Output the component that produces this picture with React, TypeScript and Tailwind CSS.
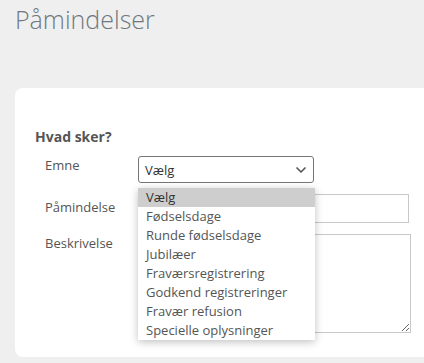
import { ChevronDown } from 'lucide-react'

const options = [
  'Vælg',
  'Fødselsdage',
  'Runde fødselsdage',
  'Jubilæer',
  'Fraværsregistrering',
  'Godkend registreringer',
  'Fravær refusion',
  'Specielle oplysninger',
]

export default function App() {
  return (
    <main
      className="h-[363px] w-[424px] overflow-hidden bg-[#efefef] text-[#555]"
      style={{ fontFamily: '"Open Sans", "Noto Sans", sans-serif' }}
    >
      <h1 className="pl-[15px] pt-[3px] text-[25px] font-light leading-[32px] text-[#6f7880]">Påmindelser</h1>

      <section className="relative ml-[15px] mt-[53px] w-[440px] rounded-[8px] bg-white pb-[24px] pl-[20px] pt-[39px]">
        <h2 className="text-[14px] font-bold leading-[20px] text-[#555]">Hvad sker?</h2>

        <div className="mt-[9px] grid grid-cols-[93px_1fr] gap-y-[11px] pl-[10px] text-[13px] leading-[18px]">
          <label>Emne</label>
          <div className="flex h-[27px] w-[176px] items-center justify-between rounded-[3px] border border-[#767676] pl-[6px] pr-[4px] text-[#333]">
            <span>Vælg</span>
            <ChevronDown size={16} strokeWidth={2.5} className="text-[#555]" />
          </div>

          <label className="pt-[4px]">Påmindelse</label>
          <input className="h-[29px] w-[271px] border border-[#c8c8c8] outline-none" />

          <label>Beskrivelse</label>
          <textarea className="h-[99px] w-[273px] border border-[#c8c8c8] outline-none" />
        </div>

        <ul className="absolute left-[123px] top-[100px] w-[177px] bg-white py-0 text-[13px] leading-[19px] shadow-[0_2px_8px_rgba(0,0,0,0.25)]">
          {options.map((o, i) => (
            <li key={o} className={i === 0 ? 'bg-[#cecece] pl-[8px] text-[#333]' : 'pl-[8px] text-[#555]'}>
              {o}
            </li>
          ))}
        </ul>
      </section>
    </main>
  )
}
